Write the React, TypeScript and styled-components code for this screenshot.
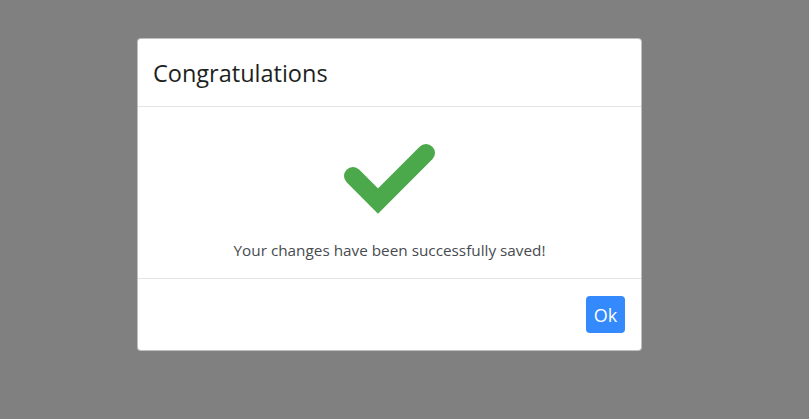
import { createGlobalStyle, styled } from 'styled-components'

const GlobalStyle = createGlobalStyle`
  html, body {
    margin: 0;
    padding: 0;
  }
  body {
    font-family: 'Open Sans', 'Noto Sans', sans-serif;
    background: #7f807f;
  }
`

const Backdrop = styled.div`
  width: 809px;
  height: 419px;
  background: #7f807f;
  padding: 38px 0 0 137px;
  box-sizing: border-box;
`

const Modal = styled.div`
  width: 505px;
  box-sizing: border-box;
  background: #fff;
  border: 1px solid rgba(0, 0, 0, 0.25);
  border-radius: 4px;
  display: flex;
  flex-direction: column;
`

const Header = styled.div`
  height: 67px;
  display: flex;
  align-items: center;
  padding: 0 15px;
  border-bottom: 1px solid #e1e3e5;
`

const Title = styled.h5`
  margin: 0;
  font-size: 23.5px;
  font-weight: 400;
  color: #1d1f21;
`

const Body = styled.div`
  display: flex;
  flex-direction: column;
  align-items: center;
  padding: 32px 16px 16px;
  border-bottom: 1px solid #e1e3e5;
`

const Check = styled.svg`
  display: block;
`

const Message = styled.p`
  margin: 19px 0 0;
  font-size: 15.3px;
  line-height: 24px;
  color: #474b4f;
`

const Footer = styled.div`
  height: 71px;
  display: flex;
  justify-content: flex-end;
  align-items: flex-start;
  padding: 17px 16px 0;
  box-sizing: border-box;
`

const Button = styled.button`
  width: 39px;
  height: 37px;
  border: none;
  border-radius: 4px;
  background: #348afd;
  color: #fff;
  font-family: inherit;
  font-size: 18px;
  padding: 0;
  cursor: pointer;
`

export default function App() {
  return (
    <>
      <GlobalStyle />
      <Backdrop>
        <Modal>
          <Header>
            <Title>Congratulations</Title>
          </Header>
          <Body>
            <Check width="100" height="80" viewBox="0 0 100 80">
              <polyline
                points="13,37 38,62 86,14"
                fill="none"
                stroke="#4ba84b"
                strokeWidth="18"
                strokeLinecap="round"
                strokeLinejoin="miter"
              />
            </Check>
            <Message>Your changes have been successfully saved!</Message>
          </Body>
          <Footer>
            <Button>Ok</Button>
          </Footer>
        </Modal>
      </Backdrop>
    </>
  )
}
